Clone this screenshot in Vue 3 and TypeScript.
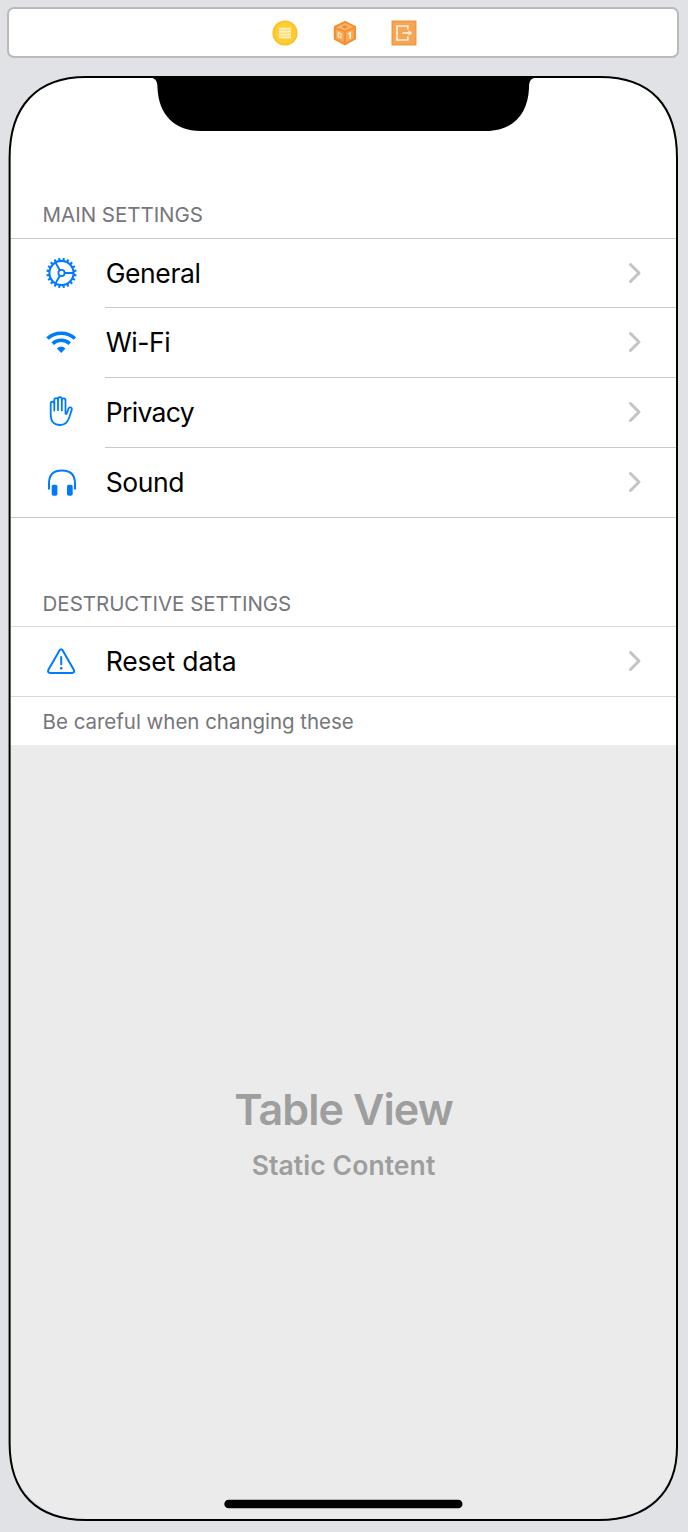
<script setup lang="ts">
type IconName = 'gear' | 'wifi' | 'hand' | 'headphones' | 'warning'

interface Row {
  icon: IconName
  label: string
  cls: string
}

const mainRows: Row[] = [
  { icon: 'gear', label: 'General', cls: 'general' },
  { icon: 'wifi', label: 'Wi-Fi', cls: 'wifi' },
  { icon: 'hand', label: 'Privacy', cls: 'privacy' },
  { icon: 'headphones', label: 'Sound', cls: 'sound' },
]
const resetRows: Row[] = [{ icon: 'warning', label: 'Reset data', cls: 'reset' }]

const sections = [
  { id: 'main', title: 'MAIN SETTINGS', rows: mainRows, footer: '' },
  { id: 'danger', title: 'DESTRUCTIVE SETTINGS', rows: resetRows, footer: 'Be careful when changing these' },
]

const teeth = Array.from({ length: 20 }, (_, i) => i * 18 + 9)
</script>

<template>
  <main class="canvas">
    <header class="dock">
      <svg class="dock-icon" viewBox="0 0 28 28">
        <circle cx="14" cy="14" r="12.6" fill="#fcc12b" />
        <circle cx="14" cy="14" r="10.7" fill="#ffcd32" />
        <rect x="7.8" y="8.7" width="12.2" height="10.8" fill="#ffdc70" />
        <path d="M7.8 9.7h12.2M7.8 12.6h12.2M7.8 15.5h12.2M7.8 18.4h12.2" stroke="#fff0bd" stroke-width="1.7" />
      </svg>
      <svg class="dock-icon" viewBox="0 0 28 28">
        <path d="M14 1.8 25 7.2v13L14 26.4 2.8 20.6V7.2z" fill="#f49030" />
        <path d="M14 4 22.6 8 13.8 11.6 5.2 8.4z" fill="#f9b36b" />
        <path d="M5 10.2 12.8 13v10.6L5 19.6zM15 13l8-3.2v9.4l-8 4.2z" fill="#f7a859" />
        <path d="M10.5 7.8 14 6.2l3 1.7-3.2 1.6z" fill="#f28a2c" />
        <path d="M7.2 13.7l2.8 1v4.2l-2.8-1.1z" fill="none" stroke="#ffe4c4" stroke-width="1.3" />
        <path d="M17.3 15l1.9-1v6" fill="none" stroke="#fff0dd" stroke-width="1.7" />
      </svg>
      <svg class="dock-icon" viewBox="0 0 28 28">
        <rect x="1.5" y="1.5" width="25" height="25" fill="#f39745" />
        <rect x="3" y="3" width="22" height="22" fill="#f6a555" />
        <path d="M17.8 10.5V7H7v14h10.8v-3.5" fill="none" stroke="#fff0dc" stroke-width="1.7" />
        <path d="M12.4 14h8.2" stroke="#fff0dc" stroke-width="1.6" />
        <path d="M18.5 11.2 22.3 14l-3.8 2.8z" fill="#fff0dc" />
      </svg>
    </header>

    <section class="phone">
      <div class="screen">
        <div v-for="section in sections" :key="section.id" class="section" :class="section.id">
          <h2 class="caption"><span>{{ section.title }}</span></h2>
          <ul class="rows">
            <li v-for="row in section.rows" :key="row.label" class="row">
              <svg class="icon" viewBox="0 0 34 34">
                <g v-if="row.icon === 'gear'" fill="none" stroke="#007aff">
                  <circle cx="17.5" cy="17" r="12.1" stroke-width="2.1" />
                  <path
                    v-for="angle in teeth"
                    :key="angle"
                    d="M17.5 4.6V1.9"
                    stroke-width="2.1"
                    :transform="`rotate(${angle} 17.5 17)`"
                  />
                  <circle cx="17.5" cy="17" r="3.1" stroke-width="1.8" />
                  <path d="M20.6 17H29.5M15.9 14.3 11.5 6.6M15.9 19.7 11.5 27.4" stroke-width="1.9" />
                </g>
                <g v-else-if="row.icon === 'wifi'" fill="none" stroke="#007aff">
                  <path d="M3.5 13.5C10.9 6.4 23.500 6.4 30.9 13.5" stroke-width="3.600" />
                  <path d="M8.700 18.600C13.4 14.2 21 14.2 25.7 18.600" stroke-width="3.500" />
                  <path d="M12.900 23.500Q17.200 19.700 21.500 23.500L17.200 27.900Z" fill="#007aff" stroke="none" />
                </g>
                <g v-else-if="row.icon === 'hand'" fill="none" stroke="#007aff" stroke-width="1.800" stroke-linecap="round" stroke-linejoin="round">
                  <path d="M6.700 20V8.600C6.700 6.100 10.300 6.100 10.300 8.600V5.100C10.300 2.500 14 2.500 14 5.100V4.300C14 1.300 17.800 1.300 17.800 4.300V5.400C17.800 2.800 21.500 2.800 21.500 5.400V18.800C22.600 19.400 22.900 18.200 23.400 16.800L24.400 13.900C25.300 11.500 28.400 12.200 27.800 14.600L25.300 22.300C23.600 27.800 20.700 30 16.200 30C10.100 30 6.700 26.300 6.700 20Z" />
                  <path d="M10.300 8.600V15.600M14 5.100V15.200M17.800 5.400V15.600" />
                </g>
                <g v-else-if="row.icon === 'headphones'">
                  <path d="M5 24.500V18.500C5 9.300 9.700 5.500 18 5.500S31 9.300 31 18.500V24.500" fill="none" stroke="#007aff" stroke-width="2" />
                  <rect x="7.700" y="19.800" width="5.700" height="11" rx="1.700" fill="#007aff" />
                  <rect x="23" y="19.800" width="5.700" height="11" rx="1.700" fill="#007aff" />
                </g>
                <g v-else fill="none" stroke="#007aff" stroke-width="2" stroke-linecap="round" stroke-linejoin="round">
                  <path d="M15.500 6.400Q17.100 4 18.700 6.400L29.800 25.800Q31.100 28.800 28 29H6.200Q3.100 28.800 4.400 25.800Z" />
                  <path d="M17.200 13V20.300" />
                  <path d="M17.200 24.200h.05" stroke-width="2.600" />
                </g>
              </svg>
              <div class="cell">
                <span class="label" :class="row.cls">{{ row.label }}</span>
                <svg class="chevron" viewBox="0 0 14 22">
                  <path d="M2.500 2.500 11 11l-8.500 8.500" fill="none" stroke="#c4c4c6" stroke-width="3" stroke-linecap="round" stroke-linejoin="round" />
                </svg>
              </div>
            </li>
          </ul>
          <p v-if="section.footer" class="footer">{{ section.footer }}</p>
        </div>
        <div class="placeholder">
          <strong class="title">Table View</strong>
          <span class="subtitle">Static Content</span>
        </div>
      </div>
      <svg class="bezel" viewBox="0 0 688 1456">
        <path
          d="M86 1H600C651 1 677 30 677 82V1371C677 1417 648 1444 599 1444H86C37 1444 9.600 1417 9.600 1367V82C9.600 30 37 1 86 1Z"
          fill="none"
          stroke="#000"
          stroke-width="2"
        />
        <path d="M148 1.500C155 1.500 157.500 4 157.500 12C158.500 38 174 55 201 55H486C513 55 528 38 529 12C529 4 531 1.500 539 1.500Z" />
        <rect x="224.300" y="1423.700" width="238.200" height="8.600" rx="4.300" />
      </svg>
    </section>
  </main>
</template>

<style>
body {
  background: #e1e2e6;
}
</style>

<style scoped>
.canvas {
  width: 688px;
  height: 1532px;
  overflow: hidden;
  background: #e1e2e6;
  font-family: Inter, 'Liberation Sans', sans-serif;
}
.dock {
  box-sizing: border-box;
  width: 672px;
  height: 51px;
  margin: 7px 0 18px 7px;
  padding-left: 3px;
  border: 2px solid #bababb;
  border-radius: 7px;
  background: #fff;
  display: flex;
  align-items: center;
  justify-content: center;
  gap: 31.500px;
}
.dock-icon {
  width: 28px;
  height: 28px;
}
.phone {
  position: relative;
  height: 1456px;
}
.screen {
  width: 667px;
  height: 1443px;
  margin-left: 10px;
  padding-top: 1px;
  box-sizing: border-box;
  border-radius: 73px;
  overflow: hidden;
  background: #fff;
  display: flex;
  flex-direction: column;
}
.caption,
.footer {
  margin: 0;
  padding-left: 32.600px;
  font-size: 20.500px;
  font-weight: 400;
  letter-spacing: -0.030px;
  color: #76767b;
  white-space: nowrap;
}
.caption {
  box-sizing: border-box;
  display: flex;
  align-items: flex-end;
  line-height: 26px;
}
.main .caption {
  height: 161px;
  padding-bottom: 10px;
}
.danger .caption {
  height: 108px;
  padding-bottom: 9px;
}
.rows {
  list-style: none;
  margin: 0;
  padding: 0;
  border-top: 1px solid #c8c8ca;
  border-bottom: 1px solid #c8c8ca;
}
.row {
  display: flex;
  height: 70px;
}
.row:first-child,
.row:last-child {
  height: 69px;
}
.icon {
  width: 34px;
  height: 34px;
  margin: 17px 27px 0 34px;
  flex: none;
}
.cell {
  flex: 1;
  box-sizing: border-box;
  display: flex;
  align-items: center;
  justify-content: space-between;
  padding: 0 35px 1px 0;
  border-bottom: 1px solid #c8c8ca;
}
.row:last-child .cell {
  border-bottom: 0;
  padding-bottom: 2px;
}
.label {
  padding-left: 0.700px;
  font-size: 26.500px;
  line-height: 34px;
  color: #000;
  white-space: nowrap;
}
.general {
  letter-spacing: -0.400px;
}
.wifi {
  letter-spacing: -0.450px;
}
.privacy {
  letter-spacing: -0.650px;
}
.sound {
  letter-spacing: -0.400px;
}
.reset {
  letter-spacing: -0.170px;
}
.chevron {
  width: 14px;
  height: 22px;
}
.danger .rows {
  border-color: #d8d8da;
}
.footer {
  height: 48px;
  line-height: 50px;
}
.placeholder {
  flex: 1;
  background: #ebebeb;
  color: #9e9e9e;
  font-weight: 600;
  display: flex;
  flex-direction: column;
  align-items: center;
  padding-top: 338px;
}
.title {
  font-size: 43px;
  line-height: 52px;
  font-weight: 600;
  letter-spacing: -0.900px;
}
.subtitle {
  margin-top: 13px;
  font-size: 26.500px;
  line-height: 34px;
  letter-spacing: 0.080px;
}
.bezel {
  position: absolute;
  left: 0;
  top: 0;
  width: 688px;
  height: 1456px;
}
</style>
